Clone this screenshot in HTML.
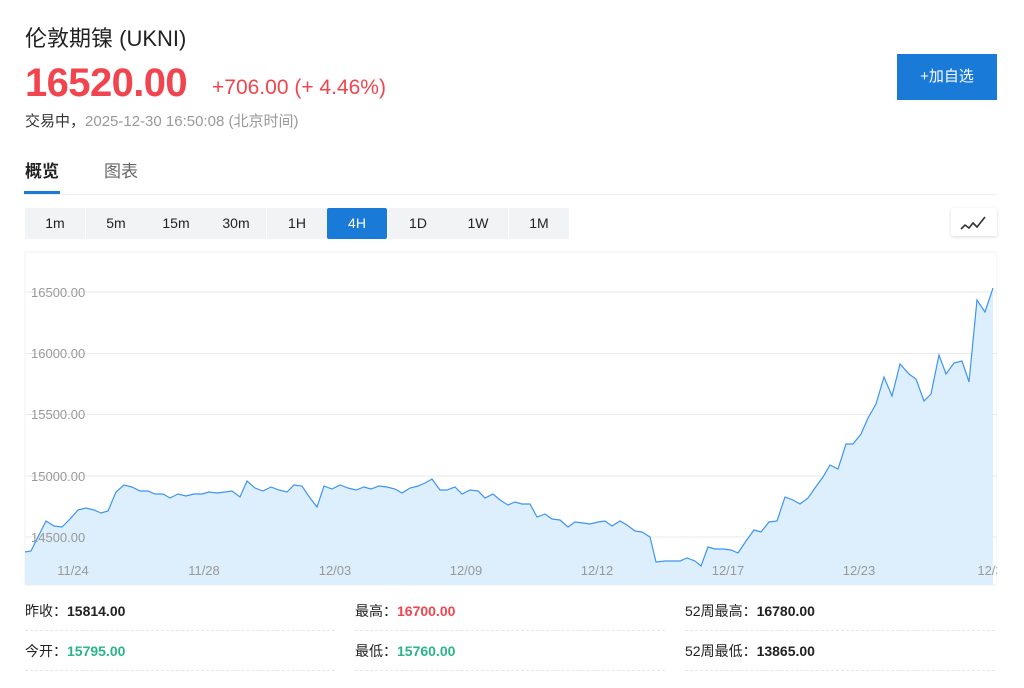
<!DOCTYPE html>
<html><head><meta charset="utf-8"><style>
*{margin:0;padding:0;box-sizing:border-box}
body{width:1024px;height:688px;background:#fff;font-family:"Liberation Sans","Noto Sans CJK SC",sans-serif;position:relative;overflow:hidden;color:#222}
.a{position:absolute;white-space:nowrap}
.tb{position:absolute;top:208px;height:31px;width:60px;background:#f1f3f5;font-size:14px;text-align:center;line-height:31px;color:#222}
.sl{position:absolute;font-size:14px;color:#222}
.sl b{font-weight:bold}
.ln{position:absolute;height:0;border-top:1px dashed #e6e6e6;width:310px}
</style></head><body>
<div class="a" style="left:25px;top:21px;font-size:22px;color:#222">伦敦期镍&nbsp;(UKNI)</div>
<div class="a" style="left:25px;top:61px;font-size:40px;font-weight:bold;color:#f0454f;letter-spacing:-0.6px">16520.00</div>
<div class="a" style="left:212px;top:76px;font-size:21px;color:#f0454f">+706.00 (+ 4.46%)</div>
<div class="a" style="left:25px;top:110px;font-size:15px;color:#333">交易中，<span style="color:#999">2025-12-30 16:50:08 (北京时间)</span></div>
<div class="a" style="left:897px;top:54px;width:100px;height:46px;background:#1a7ad8;color:#fff;font-size:15px;text-align:center;line-height:46px">+加自选</div>
<div class="a" style="left:25px;top:157px;font-size:17px;font-weight:bold;color:#222">概览</div>
<div class="a" style="left:104px;top:157px;font-size:17px;color:#666">图表</div>
<div class="a" style="left:24px;top:191px;width:36px;height:3px;background:#1a7ad8"></div>
<div class="a" style="left:24px;top:194px;width:973px;height:1px;background:#eee"></div>
<div class="tb" style="left:25px">1m</div><div class="tb" style="left:86px">5m</div><div class="tb" style="left:146px">15m</div><div class="tb" style="left:206px">30m</div><div class="tb" style="left:267px">1H</div><div class="tb" style="left:327px;background:#1a7ad8;color:#fff;border-radius:2px">4H</div><div class="tb" style="left:388px">1D</div><div class="tb" style="left:448px">1W</div><div class="tb" style="left:509px;width:60px">1M</div>
<div class="a" style="left:951px;top:208px;width:46px;height:28px;background:#fff;box-shadow:0 1px 3px rgba(0,0,0,.15);border-radius:2px">
<svg width="46" height="28"><polyline points="10,21 14,17 18,20 22,15 26,19 34,9" fill="none" stroke="#333" stroke-width="1.6"/></svg></div>
<svg class="a" style="left:0;top:0" width="1024" height="688">
<rect x="25" y="252" width="972" height="333" fill="none" stroke="#f2f2f2"/>
<g stroke="#eaeaea" stroke-width="1"><line x1="25" y1="292" x2="997" y2="292"/><line x1="25" y1="353.5" x2="997" y2="353.5"/><line x1="25" y1="414.5" x2="997" y2="414.5"/><line x1="25" y1="476" x2="997" y2="476"/><line x1="25" y1="537" x2="997" y2="537"/></g>
<polygon fill="#ddeefd" points="25,585 25,552 31,551 46,521 54,526 62,527 70,519 78,510 86,508 94,510 101,513 108,511 116,492 124,485 132,487 140,491 148,491 155,494 163,494 170,498 178,494 186,496 194,494 202,494 209,492 217,493 225,492 232,491 240,497 247,481 255,488 263,491 271,487 279,490 287,492 294,485 302,486 310,498 317,507 324,486 332,489 340,485 348,488 356,490 364,487 371,489 379,486 387,487 395,489 402,493 410,488 418,486 425,483 432,479 440,490 447,490 455,487 462,494 470,490 478,491 485,498 493,494 500,500 508,505 515,502 522,504 530,504 537,517 545,514 552,519 560,520 568,527 575,522 583,523 590,524 598,522 605,521 612,526 620,521 627,525 635,531 642,532 650,537 656,562 665,561 680,561 687,558 695,561 701,566 708,547 715,549 723,549 731,550 738,553 746,541 754,530 761,532 769,522 777,521 785,497 793,500 800,504 808,498 815,488 823,477 830,465 838,469 846,444 853,444 861,434 868,418 876,404 884,377 892,396 900,364 909,374 916,379 924,401 931,394 939,355 946,374 954,363 962,361 969,382 977,300 985,312 993,288 993,585"/>
<polyline fill="none" stroke="#3d95f0" stroke-width="1.2" points="25,552 31,551 46,521 54,526 62,527 70,519 78,510 86,508 94,510 101,513 108,511 116,492 124,485 132,487 140,491 148,491 155,494 163,494 170,498 178,494 186,496 194,494 202,494 209,492 217,493 225,492 232,491 240,497 247,481 255,488 263,491 271,487 279,490 287,492 294,485 302,486 310,498 317,507 324,486 332,489 340,485 348,488 356,490 364,487 371,489 379,486 387,487 395,489 402,493 410,488 418,486 425,483 432,479 440,490 447,490 455,487 462,494 470,490 478,491 485,498 493,494 500,500 508,505 515,502 522,504 530,504 537,517 545,514 552,519 560,520 568,527 575,522 583,523 590,524 598,522 605,521 612,526 620,521 627,525 635,531 642,532 650,537 656,562 665,561 680,561 687,558 695,561 701,566 708,547 715,549 723,549 731,550 738,553 746,541 754,530 761,532 769,522 777,521 785,497 793,500 800,504 808,498 815,488 823,477 830,465 838,469 846,444 853,444 861,434 868,418 876,404 884,377 892,396 900,364 909,374 916,379 924,401 931,394 939,355 946,374 954,363 962,361 969,382 977,300 985,312 993,288"/>
<g font-family="Liberation Sans,sans-serif" font-size="13" fill="#999">
<text x="31" y="297">16500.00</text><text x="31" y="358">16000.00</text><text x="31" y="419">15500.00</text><text x="31" y="481">15000.00</text><text x="31" y="542">14500.00</text>
<g text-anchor="middle"><text x="73" y="575">11/24</text><text x="204" y="575">11/28</text><text x="335" y="575">12/03</text><text x="466" y="575">12/09</text><text x="597" y="575">12/12</text><text x="728" y="575">12/17</text><text x="859" y="575">12/23</text><text x="990" y="575">12/3</text></g>
</g>
<rect x="997" y="252" width="27" height="340" fill="#fff"/>
</svg>
<div class="sl" style="left:25px;top:601px">昨收：<b>15814.00</b></div>
<div class="sl" style="left:355px;top:601px">最高：<b style="color:#f0454f">16700.00</b></div>
<div class="sl" style="left:685px;top:601px">52周最高：<b>16780.00</b></div>
<div class="sl" style="left:25px;top:641px">今开：<b style="color:#2bb48a">15795.00</b></div>
<div class="sl" style="left:355px;top:641px">最低：<b style="color:#2bb48a">15760.00</b></div>
<div class="sl" style="left:685px;top:641px">52周最低：<b>13865.00</b></div>
<div class="ln" style="left:25px;top:630px"></div><div class="ln" style="left:355px;top:630px"></div><div class="ln" style="left:685px;top:630px"></div>
<div class="ln" style="left:25px;top:670px"></div><div class="ln" style="left:355px;top:670px"></div><div class="ln" style="left:685px;top:670px"></div>
</body></html>
